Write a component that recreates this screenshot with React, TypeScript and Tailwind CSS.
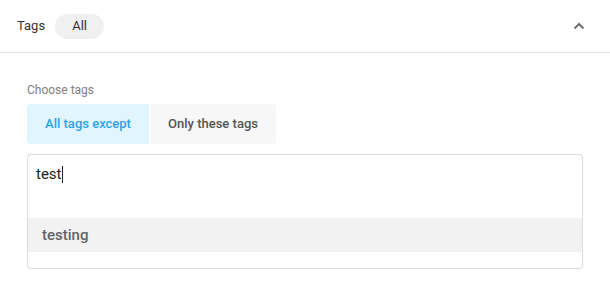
export default function App() {
  return (
    <div className="w-[610px] h-[289px] bg-white font-['Roboto',sans-serif] overflow-hidden">
      <div className="h-[53px] border-b border-[#e6e6e6] flex items-center pl-[17px] pr-[25px]">
        <span className="text-[13px] text-[#333]">Tags</span>
        <span className="ml-[10px] h-[25px] w-[49px] rounded-full bg-[#f0f0f0] flex items-center justify-center text-[13px] text-[#333]">All</span>
        <div className="ml-auto">
          <svg width="12" height="8" viewBox="0 0 12 8" fill="none">
            <path d="M1.5 6.5 L6 2 L10.5 6.5" stroke="#707070" strokeWidth="2" />
          </svg>
        </div>
      </div>
      <div className="pl-[27px] pr-[27px] pt-[30px]">
        <div className="text-[12px] text-[#808080] leading-[14px]">Choose tags</div>
        <div className="mt-[7px] flex">
          <button className="h-[40px] w-[122px] bg-[#e1f5fe] text-[#2ea3e6] text-[13px] font-medium rounded-l-[4px]">All tags except</button>
          <button className="h-[40px] w-[127px] bg-[#f7f7f7] text-[#555] text-[13px] font-medium rounded-r-[4px] border-l border-white">Only these tags</button>
        </div>
        <div className="mt-[10px] h-[48px] border border-b-0 border-[#dcdcdc] rounded-t-[4px] pl-[8px] pt-[9px] flex items-start">
          <span className="text-[15px] text-[#222] leading-[20px]">test</span>
          <span className="w-px h-[17px] bg-[#222] mt-[2px]"></span>
        </div>
        <div className="h-[67px] border border-t-0 border-[#dcdcdc] rounded-b-[4px] pt-[16px]">
          <div className="h-[34px] bg-[#f2f2f2] flex items-center pl-[14px] text-[15px] font-medium text-[#5f6368]">testing</div>
        </div>
      </div>
    </div>
  );
}
